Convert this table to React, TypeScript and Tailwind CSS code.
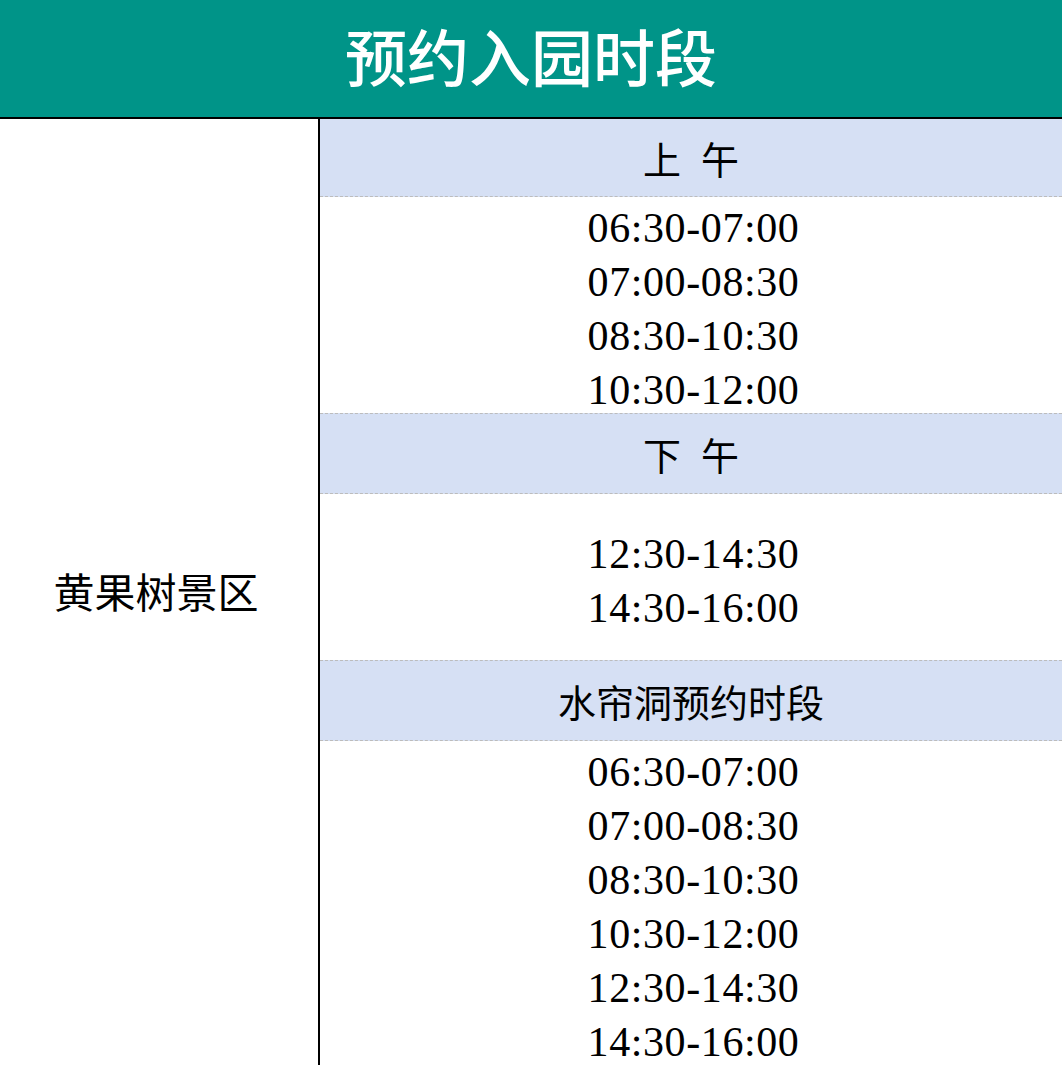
const serif = "font-['Liberation_Serif','Noto_Sans_CJK_SC',serif]";
const cjk = "font-['Noto_Sans_CJK_SC','Liberation_Serif',serif]";

function TimeRow({ time }: { time: string }) {
  return (
    <div className={`flex h-[54px] items-center justify-center pt-[7px] pl-[5px] text-[42px] leading-none tracking-[0.6px] text-black ${serif}`}>
      {time}
    </div>
  );
}

function Band({ label, first }: { label: string; first?: boolean }) {
  return (
    <div
      className={`flex items-center justify-center gap-[20px] bg-[#d6e0f4] border-dashed border-[#bcbcbc] text-[38px] leading-none text-black ${cjk} ${
        first ? "h-[78px] border-b" : "h-[81px] border-y"
      }`}
    >
      {label.split(" ").map((part) => (
        <span key={part}>{part}</span>
      ))}
    </div>
  );
}

const morning = ["06:30-07:00", "07:00-08:30", "08:30-10:30", "10:30-12:00"];
const afternoon = ["12:30-14:30", "14:30-16:00"];
const cave = ["06:30-07:00", "07:00-08:30", "08:30-10:30", "10:30-12:00", "12:30-14:30", "14:30-16:00"];

export default function App() {
  return (
    <div className="w-[1062px] h-[1066px] overflow-hidden bg-white">
      <div className="flex h-[119px] items-center justify-center bg-[#009488] border-b-2 border-black">
        <h1 className={`text-[62px] font-medium leading-none text-white pb-[8px] ${cjk}`}>预约入园时段</h1>
      </div>
      <div className="flex">
        <div className="flex w-[320px] shrink-0 items-center justify-center border-r-2 border-black pb-[4px] pr-[6px]">
          <span className={`text-[41px] leading-none text-black ${cjk}`}>黄果树景区</span>
        </div>
        <div className="flex flex-1 flex-col">
          <Band label="上 午" first />
          <div className="flex flex-col">
            {morning.map((t) => (
              <TimeRow key={t} time={t} />
            ))}
          </div>
          <Band label="下 午" />
          <div className="flex h-[166px] flex-col justify-center">
            {afternoon.map((t) => (
              <TimeRow key={t} time={t} />
            ))}
          </div>
          <Band label="水帘洞预约时段" />
          <div className="flex flex-col">
            {cave.map((t) => (
              <TimeRow key={t} time={t} />
            ))}
          </div>
        </div>
      </div>
    </div>
  );
}
